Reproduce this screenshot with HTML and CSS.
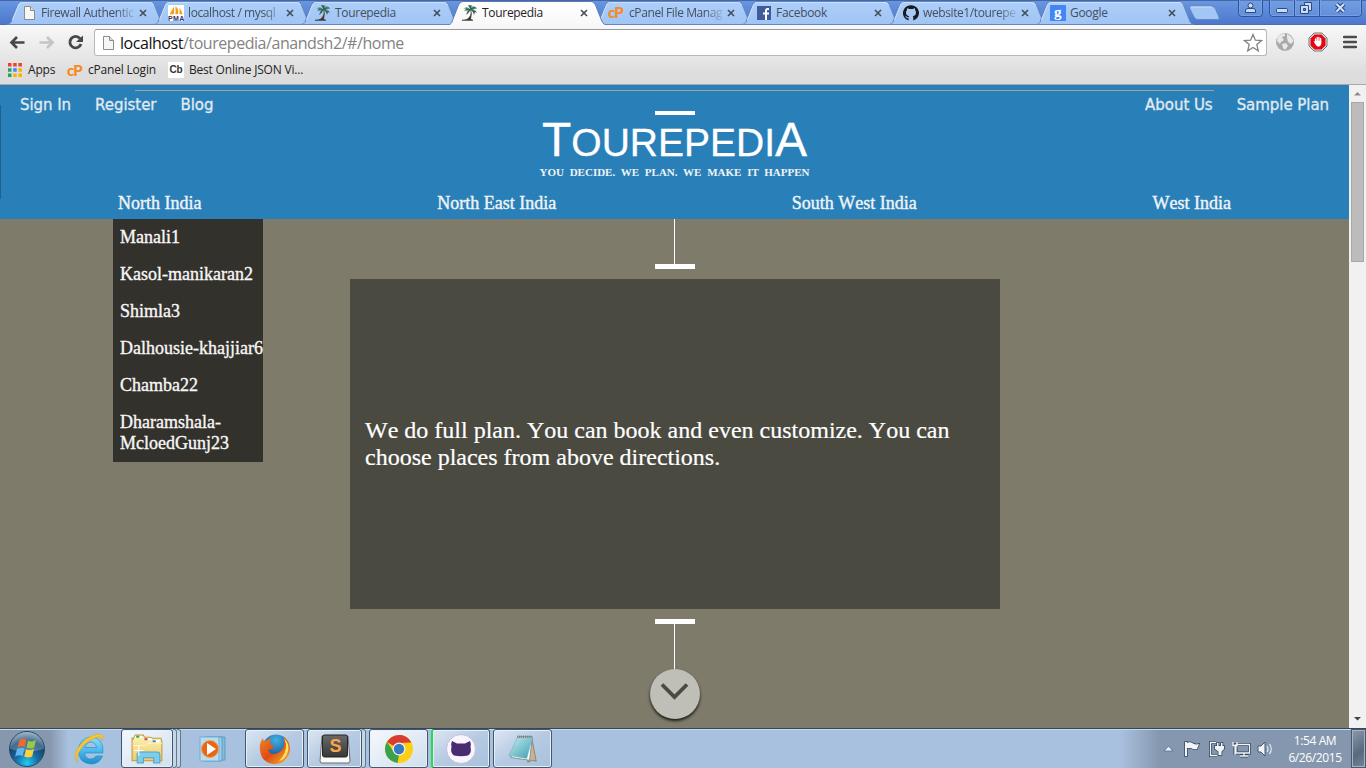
FILE: index.html
```html
<!DOCTYPE html>
<html lang="en">
<head>
<meta charset="utf-8">
<title>Tourepedia</title>
<link rel="stylesheet" href="styles.css">
</head>
<body>
<svg class="defs" width="0" height="0">
  <defs>
    <linearGradient id="tabfill" x1="0" y1="0" x2="0" y2="1"><stop offset="0" stop-color="#adcffa"/><stop offset="1" stop-color="#a0c4f4"/></linearGradient>
    <linearGradient id="activefill" x1="0" y1="0" x2="0" y2="1"><stop offset="0" stop-color="#fff"/><stop offset="1" stop-color="#f8f8f8"/></linearGradient>
    <radialGradient id="orb" cx=".5" cy=".9" r=".9"><stop offset="0" stop-color="#22cdf5"/><stop offset=".35" stop-color="#176ea5"/><stop offset=".7" stop-color="#174066"/><stop offset="1" stop-color="#9ab3c4"/></radialGradient>
    <linearGradient id="ieblue" x1="0" y1="0" x2="0" y2="1"><stop offset="0" stop-color="#8de2fa"/><stop offset=".5" stop-color="#4db9ed"/><stop offset="1" stop-color="#1f8bcc"/></linearGradient>
    <linearGradient id="folder" x1="0" y1="0" x2="0" y2="1"><stop offset="0" stop-color="#fff3b5"/><stop offset="1" stop-color="#e8cb6c"/></linearGradient>
    <radialGradient id="ffblue" cx=".5" cy=".2" r=".8"><stop offset="0" stop-color="#3fb2e8"/><stop offset="1" stop-color="#173a78"/></radialGradient>
    <linearGradient id="fforange" x1="0" y1="0" x2="1" y2="1"><stop offset="0" stop-color="#f18a25"/><stop offset=".5" stop-color="#df4b16"/><stop offset="1" stop-color="#f9bd2b"/></linearGradient>
    <linearGradient id="pad" x1="0" y1="0" x2="1" y2="1"><stop offset="0" stop-color="#c4ecef"/><stop offset="1" stop-color="#3f9eb3"/></linearGradient>
    <linearGradient id="key" x1="0" y1="0" x2="0" y2="1"><stop offset="0" stop-color="#6a6a6a"/><stop offset="1" stop-color="#373737"/></linearGradient>
    <symbol id="tab" viewBox="0 0 158 25"><path d="M0 24.5C4 24 4 22 5 19L10.500 5Q12 1.500 15 1.500H143Q146 1.500 147.500 5L153 19C154 22 155 24 158 24.500Z" fill="url(#tabfill)" stroke="#6387bd"/><path d="M5.500 20L11.500 5Q12.500 2.500 15 2.500H143Q145.500 2.500 146.500 5" fill="none" stroke="#c9e0fc"/></symbol>
    <symbol id="tab-on" viewBox="0 0 158 25"><path d="M0 25C4 24 4 22 5 19L10.500 5Q12 1.500 15 1.500H143Q146 1.500 147.500 5L153 19C154 22 155 24 158 25" fill="url(#activefill)" stroke="#5e7cb2"/></symbol>
    <symbol id="x" viewBox="0 0 8 8"><path d="M1 1L7 7M7 1L1 7" stroke="#434d58" stroke-width="1.600"/></symbol>
    <symbol id="page" viewBox="0 0 16 16"><path d="M3.500 1.500H9.500L13.500 5.500V14.500H3.500Z" fill="#f6f6f6" stroke="#8c8c8c"/><path d="M9.500 1.500V5.500H13.500" fill="#ddd" stroke="#8c8c8c"/></symbol>
    <symbol id="palm" viewBox="0 0 16 16"><path d="M8.300 5C9.500 9 8 12 5 14L2 15H10L9 13.700Q10.500 9 9.200 5" fill="#4d392d"/><path d="M0 15.200H11" stroke="#28382f"/><path d="M8.500 4.500Q5.500 1 1.500 3.500L4.500 3.600 2 6 6 5 4 10Q7 8 8.500 5Q11 6 12 10L13 7 15 8Q13.500 4.500 10 4L15 3.500Q12 0 9 3L10 .5 6 0Z" fill="#2b6354"/><path d="M4 2.500L7 3.500M4 6L6.500 5M10 2L13 2M11 5L13 6" stroke="#87aba1" stroke-width=".7"/></symbol>
    <symbol id="hand" viewBox="0 0 20 20"><path d="M6 1H14L19 6V14L14 19H6L1 14V6Z" fill="#dfdfdf" stroke="#777"/><path d="M6.500 2.500H13.500L17.500 6.500V13.500L13.500 17.500H6.500L2.500 13.500V6.500Z" fill="#e30613"/><path d="M7.500 10V7M9.200 9V5.500M10.900 9V5.500M12.600 10V6.500" stroke="#fff" stroke-width="1.300" stroke-linecap="round"/><path d="M5.500 9L7.500 10V8.800H13.300V12Q12.500 14.500 10.500 14.800 8 14.500 5.500 9Z" fill="#fff"/></symbol>
  </defs>
</svg>

<header class="chrome">
  <div class="tabstrip">
    <div class="tab"><svg class="shape"><use href="#tab"/></svg><svg class="fav"><use href="#page"/></svg><span class="fade">Firewall Authentic</span><svg class="close"><use href="#x"/></svg></div>
    <div class="tab"><svg class="shape"><use href="#tab"/></svg><svg class="fav" viewBox="0 0 16 16"><path d="M0 0H16V16H0Z" fill="#fff"/><path d="M6 1.500V9L1.500 9.500ZM7.500 1Q11 4 10 9L7.500 9.200ZM11.500 3Q14 6 14.500 9.500L11.500 9Z" fill="#f89c0e"/><text x="0" y="15.500" class="pma" textLength="16">PMA</text></svg><span class="fade">localhost / mysql</span><svg class="close"><use href="#x"/></svg></div>
    <div class="tab"><svg class="shape"><use href="#tab"/></svg><svg class="fav"><use href="#palm"/></svg><span>Tourepedia</span><svg class="close"><use href="#x"/></svg></div>
    <div class="tab active"><svg class="shape"><use href="#tab-on"/></svg><svg class="fav"><use href="#palm"/></svg><span>Tourepedia</span><svg class="close"><use href="#x"/></svg></div>
    <div class="tab"><svg class="shape"><use href="#tab"/></svg><b class="fav cp">cP</b><span class="fade">cPanel File Manag</span><svg class="close"><use href="#x"/></svg></div>
    <div class="tab"><svg class="shape"><use href="#tab"/></svg><svg class="fav" viewBox="0 0 16 16"><path d="M1 1H15V15H1Z" fill="#405b9b"/><path d="M13 4H11.500Q10 4 10 6V15M7 8.500H13" fill="none" stroke="#fff" stroke-width="2"/></svg><span>Facebook</span><svg class="close"><use href="#x"/></svg></div>
    <div class="tab"><svg class="shape"><use href="#tab"/></svg><svg class="fav" viewBox="0 0 16 16"><path d="M8 .2A7.800 7.800 0 0 0 5.600 15.500V13.300Q3.500 13.600 3 12L2 10.700Q3.500 10.700 4 12 5 12.500 5.800 12L6.200 11.200Q3 10.700 3 7.600 3 6 3.900 5.200L4 3.200Q5 3.200 6.200 4H9.800Q11 3.200 12 3.200L12.200 5.200Q13 6 13 7.600 13 10.700 9.800 11.200 10.300 11.800 10.300 12.800V15.500A7.800 7.800 0 0 0 8 .2Z" fill="#171b1e"/></svg><span class="fade">website1/tourepe</span><svg class="close"><use href="#x"/></svg></div>
    <div class="tab"><svg class="shape"><use href="#tab"/></svg><svg class="fav" viewBox="0 0 16 16"><rect width="16" height="16" rx="1" fill="#4285f4"/><text x="4" y="11.500" class="goog">g</text></svg><span>Google</span><svg class="close"><use href="#x"/></svg></div>
    <svg class="newtab" viewBox="0 0 34 16"><path d="M1.500 3Q1 1 3.500 1H23Q25.500 1 27 3L31 12Q32 14.500 29.500 14.500H10Q7 14.500 6 12Z" fill="#a4c6f4" stroke="#6488c5"/><path d="M3 2H24" stroke="#c7ddfa"/></svg>
    <svg class="winctl" viewBox="0 0 128 25">
      <path d="M.5 0V13Q.5 16.500 4 16.500H21Q24.500 16.500 24.500 13V0M31.500 0V13Q31.500 16.500 35 16.500H120Q123.500 16.500 123.500 13V0M56.500 0V16M81.500 0V16" fill="#8db2ec" fill-opacity=".25" stroke="#2f549e"/>
      <path d="M1.500 0V13Q2 15.500 4 15.500H21Q23.500 15 23.500 13V0M32.500 0V13Q33 15.500 35 15.500H55.500V0M57.500 0V15.500H80.500V0M82.500 0V15.500H120Q122.500 15 122.500 13V0" fill="none" stroke="#779fe2"/>
      <g fill="#c9dafa" stroke="#294b80"><path d="M7.500 12.500V10Q8 8.500 10 8.500H15Q17 8.500 17.500 10V12.500Z"/><circle cx="12.500" cy="5.500" r="2.500"/><rect x="38.500" y="8.500" width="11" height="4" rx="1"/><path d="M66.500 2.500H73.500V10.500H66.500Z"/><path d="M62.500 5.500H70.500V13.500H62.500Z"/><path d="M65.500 8.500H67.500V10.500H65.500Z" fill="#5684d3"/></g>
      <path d="M98.500 4L106 11.500M106 4L98.500 11.500" stroke="#294b80" stroke-width="4.200"/><path d="M98.500 4L106 11.500M106 4L98.500 11.500" stroke="#d3e2fb" stroke-width="2"/>
    </svg>
  </div>
  <div class="toolbar">
    <svg class="navicons" viewBox="0 0 90 30"><path d="M24.500 16.500H11.500M17 11L11.500 16.500 17 22" fill="none" stroke="#484848" stroke-width="2.700"/><path d="M39.500 16.500H52M47 11L52.500 16.500 47 22" fill="none" stroke="#c5c5c5" stroke-width="2.700"/><path d="M80 12.500A5.700 5.700 0 1 0 81 18" fill="none" stroke="#484848" stroke-width="2.800"/><path d="M83 9.500V16H76Z" fill="#484848"/></svg>
    <div class="omnibox"><svg class="fav"><use href="#page"/></svg><span class="url"><i>localhost</i>/tourepedia/anandsh2/#/home</span><svg class="star" viewBox="0 0 20 20"><path d="M10 1.500L12.400 7.200 18.500 7.600 13.800 11.600 15.300 17.800 10 14.500 4.700 17.800 6.200 11.600 1.500 7.600 7.600 7.200Z" fill="#fff" stroke="#838383" stroke-width="1.300"/></svg></div>
    <svg class="globe" viewBox="0 0 20 20"><circle cx="10" cy="10" r="9" fill="#a9a9a9"/><path d="M2.500 5Q6 1 10 1.500L10 4 7 5 9 8 6 10 5 12 2 9ZM12 2Q17 4 18.500 9L16 12 13 10 12 6ZM7 12L11 11 13 14 10 18 8 16Z" fill="#e8e8e8"/></svg>
    <svg class="hand"><use href="#hand"/></svg>
    <svg class="menu" viewBox="0 0 14 14"><path d="M1 2H13M1 7H13M1 12H13" stroke="#4b4b4b" stroke-width="2.500" stroke-linecap="round"/></svg>
  </div>
  <div class="bookmarks">
    <svg class="apps" viewBox="0 0 14 14"><path d="M0 0H3.500V3.500H0ZM5.200 0H8.700V3.500H5.200ZM10.400 0H13.900V3.500H10.400Z" fill="#ea4335"/><path d="M0 5.200H3.500V8.700H0ZM0 10.400H3.500V13.900H0Z" fill="#27a25c"/><path d="M5.200 5.200H8.700V8.700H5.200Z" fill="#4285f4"/><path d="M10.400 5.200H13.900V8.700H10.400ZM5.200 10.400H8.700V13.900H5.200ZM10.400 10.400H13.900V13.900H10.400Z" fill="#f6b400"/></svg>
    <span class="b-apps">Apps</span><b class="cp">cP</b><span class="b-cp">cPanel Login</span><b class="cb">Cb</b><span class="b-json">Best Online JSON Vi...</span>
  </div>
</header>

<main class="viewport">
  <div class="page">
    <div class="banner">
      <div class="rule"></div>
      <div class="edge"></div>
      <nav class="userlinks"><a>Sign In</a><a>Register</a><a>Blog</a><a class="about">About Us</a><a class="plan">Sample Plan</a></nav>
      <div class="brand"><div class="bar"></div><h1><big>T</big>OUREPEDI<big>A</big></h1><p>YOU DECIDE. WE PLAN. WE MAKE IT HAPPEN</p></div>
      <nav class="regions"><a>North India</a><a>North East India</a><a>South West India</a><a>West India</a></nav>
    </div>
    <div class="content">
      <ul class="places"><li>Manali1</li><li>Kasol-manikaran2</li><li>Shimla3</li><li>Dalhousie-khajjiar6</li><li>Chamba22</li><li>Dharamshala-<br>McloedGunj23</li></ul>
      <section class="intro">
        <div class="stem"></div><div class="cap"></div>
        <div class="panel"><p>We do full plan. You can book and even customize. You can<br>choose places from above directions.</p></div>
        <div class="cap"></div><div class="stem"></div>
        <div class="down"><svg viewBox="0 0 50 50"><path d="M12 15.500L24.500 28 37 15.500" fill="none" stroke="#4a4a42" stroke-width="3.800"/></svg></div>
      </section>
    </div>
  </div>
  <div class="scrollbar"><svg viewBox="0 0 17 17"><path d="M5 10.500H12L8.500 7Z" fill="#8d8d8d"/></svg><div class="thumb"></div><svg class="end" viewBox="0 0 17 17"><path d="M5 6H12L8.500 9.500Z" fill="#444"/></svg></div>
</main>

<footer class="taskbar">
  <div class="start"><svg viewBox="0 0 38 38"><circle cx="19" cy="19" r="17.500" fill="url(#orb)" stroke="#25496a"/><path d="M2 19A17 17 0 0 1 36 19Q19 24 2 19" fill="#b8d2e3" opacity=".3"/><path d="M11.500 10Q15 7.500 18.500 9.700L16.800 17Q13.300 15.500 9.500 17.500Z" fill="#f06731"/><path d="M20 10.500Q24 12.500 28 10L26.200 17.500Q22.500 19.500 18.500 17.600Z" fill="#92cc45"/><path d="M9 19Q13 17 16.500 18.500L14.700 26Q11 24.500 7.200 26.500Z" fill="#61b6ed"/><path d="M18 19.300Q22 21 26 18.800L24.200 26.500Q20 28.500 16.200 26.500Z" fill="#fed03c"/></svg></div>
  <svg class="ie" viewBox="0 0 34 34"><path d="M30 21H11.500Q12.500 27 18 27 21 27 23 24H29.500Q26.500 32 18 32 5.500 31 5.500 18.500 6 6 18 5 31 6 30 21ZM12 15.500H23.500Q22.500 10 18 10 13 10 12 15.500Z" fill="url(#ieblue)" stroke="#168ac8" stroke-width=".6"/><path d="M5 30Q-1 27 5 16 13 4 25 2 32 2 29 9 29 3 22 6 11 10 6 20 2 27 5 30Z" fill="#fcc52a" stroke="#dca224" stroke-width=".5"/></svg>
  <div class="btn explorer"><svg viewBox="0 0 34 32"><path d="M3 7L5 3H13L14 5H20L22 6H30L31 9V28H2V6Z" fill="url(#folder)" stroke="#bd9b46"/><path d="M5 4.500H12M13 7H21M22 9H29" stroke-width="2" stroke="#fff"/><path d="M6 4.500H9" stroke="#27ac3f" stroke-width="2"/><path d="M14 7H17" stroke="#df4428" stroke-width="2"/><path d="M22 9H25" stroke="#298ae0" stroke-width="2"/><path d="M3 13H15L17 11H31" fill="none" stroke="#fff4bd"/><path d="M7 30V21Q8 19.500 10 19.500H26Q29 19.500 29 22V30H23V25H13V30Z" fill="#7ecdea" stroke="#4ea4c5"/><path d="M4 18H13M8.500 13V23" stroke="#fff"/></svg></div><i class="stack"></i><i class="stack second"></i>
  <svg class="wmp" viewBox="0 0 30 28"><path d="M9 2H27V25H9Z" fill="#87bbdb" stroke="#5b9dc8"/><path d="M6 2H24V26H6Z" fill="#a2cee7" stroke="#5b9dc8"/><path d="M2 2H21V26H2Z" fill="#b6ddf1" stroke="#72afd2"/><circle cx="12" cy="14" r="8.500" fill="#e96518" stroke="#f4a24d"/><path d="M9 8L18 14 9 20Z" fill="#fff"/></svg>
  <div class="btn firefox"><svg viewBox="0 0 32 32"><circle cx="17" cy="15" r="13.500" fill="url(#ffblue)"/><path d="M24 3Q35 13 29 23 24 32 14 31 2 29 1 17 0 10 4 5L5 9Q8 6 12 6L11 11 15 13 13 16 9 17Q12 23 19 20 25 17 25 11 26 7 24 3Z" fill="url(#fforange)"/><path d="M25 5Q32 12 28 21 25 27 20 28 28 20 27 11Z" fill="#ffe35e"/></svg></div>
  <div class="btn sublime"><svg viewBox="0 0 32 30"><path d="M3 2H29L31 27Q31 29 29 29H3Q1 29 1 27Z" fill="#fafafa" stroke="#6c6c6c"/><rect x="3.500" y="1" width="25" height="22" rx="2" fill="url(#key)" stroke="#252525"/><text x="10.500" y="17.500" class="sub">S</text></svg></div><i class="stack"></i>
  <div class="btn chromeicon"><svg viewBox="0 0 32 32"><circle cx="16" cy="16" r="14" fill="#ffcf14"/><path d="M16 16L3.900 9A14 14 0 0 1 28.100 9L16 10Z" fill="#db3c31"/><path d="M3.900 9L11 19 16 22 14.500 30A14 14 0 0 1 3.900 9Z" fill="#3ba14c"/><path d="M16 2A14 14 0 0 1 28.200 9.500H16Z" fill="#db3c31"/><circle cx="16" cy="16" r="6.500" fill="#f2f2ec"/><circle cx="16" cy="16" r="5.200" fill="#357bc4"/></svg></div>
  <div class="btn github"><svg viewBox="0 0 32 32"><circle cx="16" cy="16" r="14.500" fill="#f8f5ff" stroke="#c2bfd8"/><path d="M7 8L12 10.500H20L25 8Q26.500 11 25.500 14 27 20 23 22.500 16 24 9 22.500 5 20 6.500 14 5.500 11 7 8Z" fill="#492b70"/></svg></div>
  <div class="btn notepad"><svg viewBox="0 0 34 32"><path d="M26 3L31 29 27 28 22 30 25 10Z" fill="#c7b490" stroke="#8c8069"/><path d="M12 3H27L24 28 4 25Z" fill="#fff" stroke="#788f96"/><path d="M11 4H27L21 26 2 23Z" fill="url(#pad)" stroke="#72adb9" stroke-width=".5"/><path d="M11 3H27" stroke="#777" stroke-width="2.500" stroke-dasharray="1 1"/></svg></div>
  <div class="tray"><svg viewBox="0 0 112 22"><path d="M0 13H9L4.500 8Z" fill="#e7edf5" stroke="#50647c" stroke-width=".7"/><path d="M21 4H23V18H21ZM23 5Q26 3.500 29 5.500 32 7 35 6L33 11Q30 12 27 10H23Z" fill="#f2f5f8" stroke="#34475d" stroke-width="1.500" paint-order="stroke"/><g fill="none" stroke="#34475d" stroke-width="3"><path d="M52 4.500H46.500V17.500H53M72 6.500H85.500V15H72ZM76 18H84M71 5V17"/></g><path d="M52 4.500H46.500V17.500H53M72 6.500H85.500V15H72ZM76 18H84M80 15V18M69 4V7.500H73V4M71 7V17" fill="none" stroke="#f2f5f8" stroke-width="1.300"/><path d="M51 8H53V5H54.500V8H57V5H58.500V8H60V11L57.500 13.500V17H54.500V13.500L51 11Z" fill="#f2f5f8" stroke="#34475d" stroke-width="1.500" paint-order="stroke"/><path d="M94 8H97L101 4V18L97 14H94Z" fill="#f2f5f8" stroke="#435970"/><path d="M103 8Q105 11 103 14M105.500 6Q109 11 105.500 16" fill="none" stroke="#e9eff6" stroke-width="1.100"/></svg></div>
  <time class="clock"><span class="hour">1:54 AM</span><span>6/26/2015</span></time>
  <div class="showdesk"></div>
</footer>
</body>
</html>
```
FILE: styles.css
```css
* { box-sizing: border-box; }
body { margin: 0; width: 1366px; height: 768px; overflow: hidden; display: flex; flex-direction: column; font-family: "Open Sans", sans-serif; }
svg { display: block; flex: none; }
.defs { position: absolute; }
.chrome { height: 85px; flex: none; border-bottom: 1px solid #a8a8a8; background: linear-gradient(#f8f8f8 25px, #dedede 72px, #dcdcdc); }
.tabstrip { height: 25px; display: flex; padding-left: 7px; background: linear-gradient(#6996df, #4b78ce); border-top: 1px solid #4467aa; border-bottom: 1px solid #506fa8; }
.tab { position: relative; z-index: 1; width: 147px; height: 25px; margin-top: -1px; flex: none; display: flex; align-items: center; padding: 1px 0 0 14px; font-size: 12px; letter-spacing: -.3px; color: #454f5d; }
.tab.active { z-index: 2; color: #222; }
.shape { position: absolute; left: 0; top: 0; width: 158px; height: 25px; }
.fav { position: relative; width: 16px; height: 16px; flex: none; }
.tab span { position: relative; width: 97px; margin: 0 1px 0 4px; white-space: nowrap; line-height: 20px; flex: none; }
.tab .fade { letter-spacing: -.4px; -webkit-mask-image: linear-gradient(90deg, #000 75px, transparent 97px); mask-image: linear-gradient(90deg, #000 75px, transparent 97px); }
.close { position: relative; width: 8px; height: 8px; }
.cp { font: 900 15px/16px Lato, sans-serif; letter-spacing: -1px; color: #f58a20; }
.tab .cp { left: -1px; top: -1px; }
.pma { font: bold 7px "Liberation Sans", sans-serif; fill: #333366; }
.goog { font: bold 15px "Liberation Serif", serif; fill: #fff; }
.newtab { width: 34px; height: 16px; margin: 4px 0 0 5px; }
.winctl { width: 128px; height: 25px; margin: -1px 0 0 16px; }
.toolbar { height: 31px; display: flex; align-items: center; }
.navicons { width: 90px; height: 30px; margin-right: 4px; }
.navicons, .omnibox { flex: none; }
.omnibox { width: 1173px; height: 27px; margin-top: 4px; padding: 0 3px 0 5px; background: #fff; border: 1px solid #b8b8b8; border-top-color: #999; border-radius: 3px; display: flex; align-items: center; }
.omnibox .fav { margin-right: 4px; }
.url { flex: 1; font-size: 16px; line-height: 22px; color: #838383; letter-spacing: -.45px; }
.url i { font-style: normal; color: #111; }
.star { width: 20px; height: 20px; }
.globe, .hand { width: 20px; height: 20px; margin: 3px 0 0 8px; }
.hand { margin-left: 13px; }
.menu { width: 14px; height: 14px; margin: 3px 0 0 15px; }
.bookmarks { height: 28px; display: flex; align-items: center; padding: 0 0 1px 8px; font-size: 12px; color: #222; white-space: nowrap; letter-spacing: -.2px; }
.apps { width: 14px; height: 14px; margin-right: 6px; }
.b-apps { width: 39px; }
.bookmarks .cp { width: 17px; margin-right: 4px; }
.b-cp { width: 80px; }
.cb { width: 16px; height: 16px; margin-right: 5px; background: #fff; font: bold 10px/16px "Liberation Sans", sans-serif; text-align: center; color: #333; }

.viewport { height: 643px; display: flex; flex: none; font-family: "Liberation Serif", serif; }
.page { width: 1349px; background: #7f7b6b; }
.banner { position: relative; height: 134px; background: #2980b9; color: #f0f3f5; }
.rule { position: absolute; left: 135px; top: 5px; width: 1079px; height: 1px; background: #9ba3a3; }
.edge { position: absolute; left: 0; top: 20px; width: 1px; height: 94px; background: #1e618d; }
.userlinks { height: 26px; padding: 10px 20px 0; display: flex; gap: 24px; font: 15px/20px "DejaVu Sans", sans-serif; letter-spacing: -.05px; color: #e2eaf0; white-space: nowrap; -webkit-text-stroke: .3px; }
.about { margin-left: auto; }
.brand { height: 73px; display: flex; flex-direction: column; align-items: center; }
.bar { width: 40px; height: 4px; background: #fff; }
.brand h1 { margin: 1px 0 -1px; height: 54px; font: 39px/54px "Liberation Sans", sans-serif; color: #fff; white-space: nowrap; -webkit-text-stroke: .3px; }
.brand big { font-size: 48px; line-height: 1; }
.brand p { margin: -3px 0 0; font-size: 11px; line-height: 12px; font-weight: bold; letter-spacing: 0; word-spacing: 3px; white-space: nowrap; }
.regions { display: flex; justify-content: space-between; padding: 9px 118px 0; font-size: 18px; line-height: 21px; font-kerning: none; -webkit-text-stroke: .4px; }
.content { display: flex; }
.places { list-style: none; margin: 0 87px 0 113px; padding: 8px 0 0 7px; width: 150px; height: 243px; background: #33312b; color: #f7f7f7; font-size: 18px; line-height: 21px; -webkit-text-stroke: .35px; white-space: nowrap; }
.places li { margin-bottom: 16px; }
.intro { width: 650px; display: flex; flex-direction: column; align-items: center; }
.stem { width: 1px; height: 45px; margin-right: 1px; background: #fff; }
.cap { width: 40px; height: 5px; background: #fff; }
.panel { width: 650px; height: 330px; margin: 10px 0; padding-left: 15px; display: flex; align-items: center; background: #4a4a41; color: #fff; }
.panel p { margin: 0; font-size: 24px; line-height: 27px; font-kerning: none; white-space: nowrap; -webkit-text-stroke: .2px; }
.down { width: 50px; height: 50px; background: #bfbeb7; border-radius: 50%; box-shadow: 0 2px 3px #1a1915; }
.scrollbar { width: 17px; background: #f1f1f1; display: flex; flex-direction: column; align-items: center; }
.scrollbar svg { width: 17px; height: 17px; }
.thumb { width: 13px; height: 160px; border: 1px solid #a8a8a8; background: #bcbcbc; }
.scrollbar .end { margin-top: auto; }

.taskbar { height: 40px; flex: none; border-top: 1px solid #35465c; display: flex; align-items: center; background: linear-gradient(90deg, #8797ad 0 50px, #a8c1df 68px 1120px, #8597ae 1160px); box-shadow: inset 0 1px #c6d9ed; }
.start { width: 54px; padding-left: 8px; flex: none; }
.start svg { width: 38px; height: 38px; }
.ie { width: 34px; height: 34px; margin: 0 14px 0 19px; }
.btn { width: 59px; height: 39px; flex: none; border: 1px solid #42566e; border-radius: 3px; box-shadow: inset 0 0 0 1px #e7f0f9; background: linear-gradient(145deg, #dce6f2, #b6cae2 50%, #a9c1dd); display: flex; align-items: center; justify-content: center; }
.btn svg { width: 32px; height: 32px; }
.btn.explorer { width: 52px; background: linear-gradient(145deg, #f4f8fc, #d0dfef); }
.btn.explorer svg { width: 35px; height: 33px; }
.stack { flex: none; width: 4px; height: 39px; border: solid #63788f; border-width: 1px 1px 1px 0; border-radius: 0 3px 3px 0; background: #c5d6e9; }
.second { margin-right: 17px; }
.wmp { width: 30px; height: 28px; margin-right: 17px; }
.firefox { margin-right: 3px; }
.btn.sublime { width: 55px; }
.sublime + .stack { margin-right: 3px; }
.sub { font: bold 18px "Liberation Sans", sans-serif; fill: #faa647; }
.chromeicon { margin-right: 3px; background: linear-gradient(145deg, #f6f9fd, #cfdeed); }
.github { margin-right: 3px; border-left: 2px solid #25dc46; }
.tray { margin-left: auto; width: 112px; }
.tray svg { width: 112px; height: 22px; }
.clock { width: 73px; margin-right: 2px; flex: none; display: flex; flex-direction: column; align-items: center; font-size: 12px; line-height: 17px; letter-spacing: -.4px; color: #fff; padding: 0 0 0 5px; }
.showdesk { width: 15px; height: 39px; flex: none; border: 1px solid #47586d; box-shadow: inset 0 0 0 1px #a5b2c1; background: linear-gradient(145deg, #8b9bad, #58697e 60%, #71859b); }
```
